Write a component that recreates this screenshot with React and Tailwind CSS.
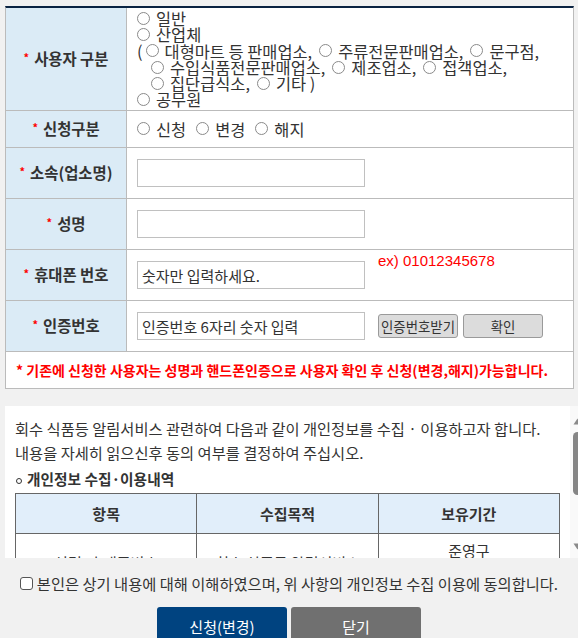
import React from "react";

function Radio() {
  return <span className="inline-block w-[13px] h-[13px] rounded-full border border-[#8a8a8a] bg-white shrink-0" />;
}

function Opt({ label, first }) {
  return (
    <span className={first ? "inline-flex items-center" : "inline-flex items-center ml-[7px]"}>
      <Radio />
      <span className="ml-[6px]">{label}</span>
    </span>
  );
}

function Label({ text }) {
  return (
    <div className="w-[121px] shrink-0 bg-[#dbebf6] border-r border-[#bbbbbb] flex items-center justify-center text-[15.4px] font-bold text-[#333]">
      <span className="text-[#ff0000] text-[11px] mr-[5px] relative -top-[2px]">*</span>
      {text}
    </div>
  );
}

function TextBox({ placeholder }) {
  return (
    <input
      className="w-[228px] h-[28px] border border-[#c0c0c0] bg-white px-[4px] text-[15px] text-[#333] placeholder:text-[#333] outline-none"
      placeholder={placeholder}
    />
  );
}

export default function App() {
  return (
    <div className="w-[578px] h-[638px] overflow-hidden bg-[#f1f1f1] pt-[6px] font-['Noto_Sans_CJK_KR',sans-serif] text-[#333]">
      {/* form table */}
      <div className="ml-[5px] w-[569px] bg-white border-x border-b border-[#bbbbbb] border-t-2 border-t-[#0a2342]">
        <div className="flex h-[103px] border-b border-[#bbbbbb]">
          <Label text="사용자 구분" />
          <div className="pl-[10px] pt-[2px] text-[16.4px] leading-[16.3px]">
            <div className="flex"><Opt first label="일반" /></div>
            <div className="flex"><Opt first label="산업체" /></div>
            <div className="flex items-center">
              <span>(</span>
              <span className="ml-[3px] inline-flex items-center"><Radio /><span className="ml-[6px]">대형마트 등 판매업소,</span></span>
              <Opt label="주류전문판매업소," />
              <Opt label="문구점," />
            </div>
            <div className="flex items-center pl-[14px]">
              <Opt first label="수입식품전문판매업소," />
              <Opt label="제조업소," />
              <Opt label="접객업소," />
            </div>
            <div className="flex items-center pl-[14px]">
              <Opt first label="집단급식소," />
              <Opt label="기타 )" />
            </div>
            <div className="flex"><Opt first label="공무원" /></div>
          </div>
        </div>

        <div className="flex h-[37px] border-b border-[#bbbbbb]">
          <Label text="신청구분" />
          <div className="pl-[10px] flex items-center text-[16.4px] gap-[10px]">
            <Opt first label="신청" />
            <Opt first label="변경" />
            <Opt first label="해지" />
          </div>
        </div>

        <div className="flex h-[51px] border-b border-[#bbbbbb]">
          <Label text="소속(업소명)" />
          <div className="pl-[10px] flex items-center">
            <TextBox />
          </div>
        </div>

        <div className="flex h-[51px] border-b border-[#bbbbbb]">
          <Label text="성명" />
          <div className="pl-[10px] flex items-center">
            <TextBox />
          </div>
        </div>

        <div className="flex h-[51px] border-b border-[#bbbbbb]">
          <Label text="휴대폰 번호" />
          <div className="pl-[10px] flex items-start">
            <div className="mt-[11px]"><TextBox placeholder="숫자만 입력하세요." /></div>
            <span className="ml-[13px] mt-[2px] leading-[18px] text-[15px] text-[#ff0000] font-['Liberation_Sans',sans-serif]">
              ex) 01012345678
            </span>
          </div>
        </div>

        <div className="flex h-[51px] border-b border-[#bbbbbb]">
          <Label text="인증번호" />
          <div className="pl-[10px] flex items-center">
            <TextBox placeholder="인증번호 6자리 숫자 입력" />
            <button className="ml-[13px] w-[80px] h-[24px] bg-[#dcdcdc] border border-[#9a9a9a] rounded-[3px] text-[13.4px] text-[#333] whitespace-nowrap">
              인증번호받기
            </button>
            <button className="ml-[5px] w-[80px] h-[24px] bg-[#dcdcdc] border border-[#9a9a9a] rounded-[3px] text-[13.4px] text-[#333]">
              확인
            </button>
          </div>
        </div>

        <div className="h-[36px] pl-[10px] flex items-center text-[14px] font-bold text-[#ff0000] whitespace-nowrap">
          * 기존에 신청한 사용자는 성명과 핸드폰인증으로 사용자 확인 후 신청(변경,해지)가능합니다.
        </div>
      </div>

      {/* privacy agreement */}
      <div className="mt-[17px] ml-[5px] w-[580px] h-[152px] flex overflow-hidden bg-white">
        <div className="w-[565px] shrink-0 px-[10px] pt-[10px] text-[15.3px] leading-[24px]">
          <p className="whitespace-nowrap">회수 식품등 알림서비스 관련하여 다음과 같이 개인정보를 수집 · 이용하고자 합니다.</p>
          <p>내용을 자세히 읽으신후 동의 여부를 결정하여 주십시오.</p>
          <div className="mt-[3px] flex items-center font-bold text-[14.7px]">
            <span className="inline-block w-[6px] h-[6px] rounded-full border border-[#333] mt-[3px] ml-[1px] mr-[5px]" />
            개인정보 수집·이용내역
          </div>
          <table className="mt-[2px] w-full border-collapse table-fixed text-[15px]">
            <thead>
              <tr>
                <th className="border border-[#666] bg-[#e1eefa] h-[40px] font-bold">항목</th>
                <th className="border border-[#666] bg-[#e1eefa] h-[40px] font-bold">수집목적</th>
                <th className="border border-[#666] bg-[#e1eefa] h-[40px] font-bold">보유기간</th>
              </tr>
            </thead>
            <tbody>
              <tr>
                <td className="border border-[#666] py-[5px] text-center">성명, 휴대폰번호</td>
                <td className="border border-[#666] py-[5px] text-center">회수 식품등 알림서비스</td>
                <td className="border border-[#666] py-[5px] text-center">
                  준영구
                  <br />
                  (서비스 해지 시 파기)
                </td>
              </tr>
            </tbody>
          </table>
        </div>
        <div className="w-[15px] shrink-0 bg-[#f9f9f9] relative">
          <svg className="absolute left-[3px] top-[12px]" width="9" height="7" viewBox="0 0 9 7">
            <path d="M4.5 0.5 L8.5 6.5 L0.5 6.5 Z" fill="#8a8a8a" />
          </svg>
          <div className="absolute left-[3px] top-[26px] w-[9px] h-[63px] rounded-full bg-[#858585]" />
          <svg className="absolute left-[3px] top-[137px]" width="9" height="7" viewBox="0 0 9 7">
            <path d="M0.5 0.5 L8.5 0.5 L4.5 6.5 Z" fill="#8a8a8a" />
          </svg>
        </div>
      </div>

      <div className="mt-[13px] flex items-center justify-center leading-[24px] text-[15.3px] whitespace-nowrap">
        <span className="inline-block w-[13px] h-[13px] rounded-[3px] border border-[#555] bg-white shrink-0" />
        <span className="ml-[4px]">본인은 상기 내용에 대해 이해하였으며, 위 사항의 개인정보 수집 이용에 동의합니다.</span>
      </div>

      <div className="mt-[12px] flex justify-center gap-[4px]">
        <button className="w-[130px] h-[40px] bg-[#004380] text-white text-[15px] rounded-t-[3px]">신청(변경)</button>
        <button className="w-[130px] h-[40px] bg-[#707070] text-white text-[15px] rounded-t-[3px]">닫기</button>
      </div>
    </div>
  );
}
